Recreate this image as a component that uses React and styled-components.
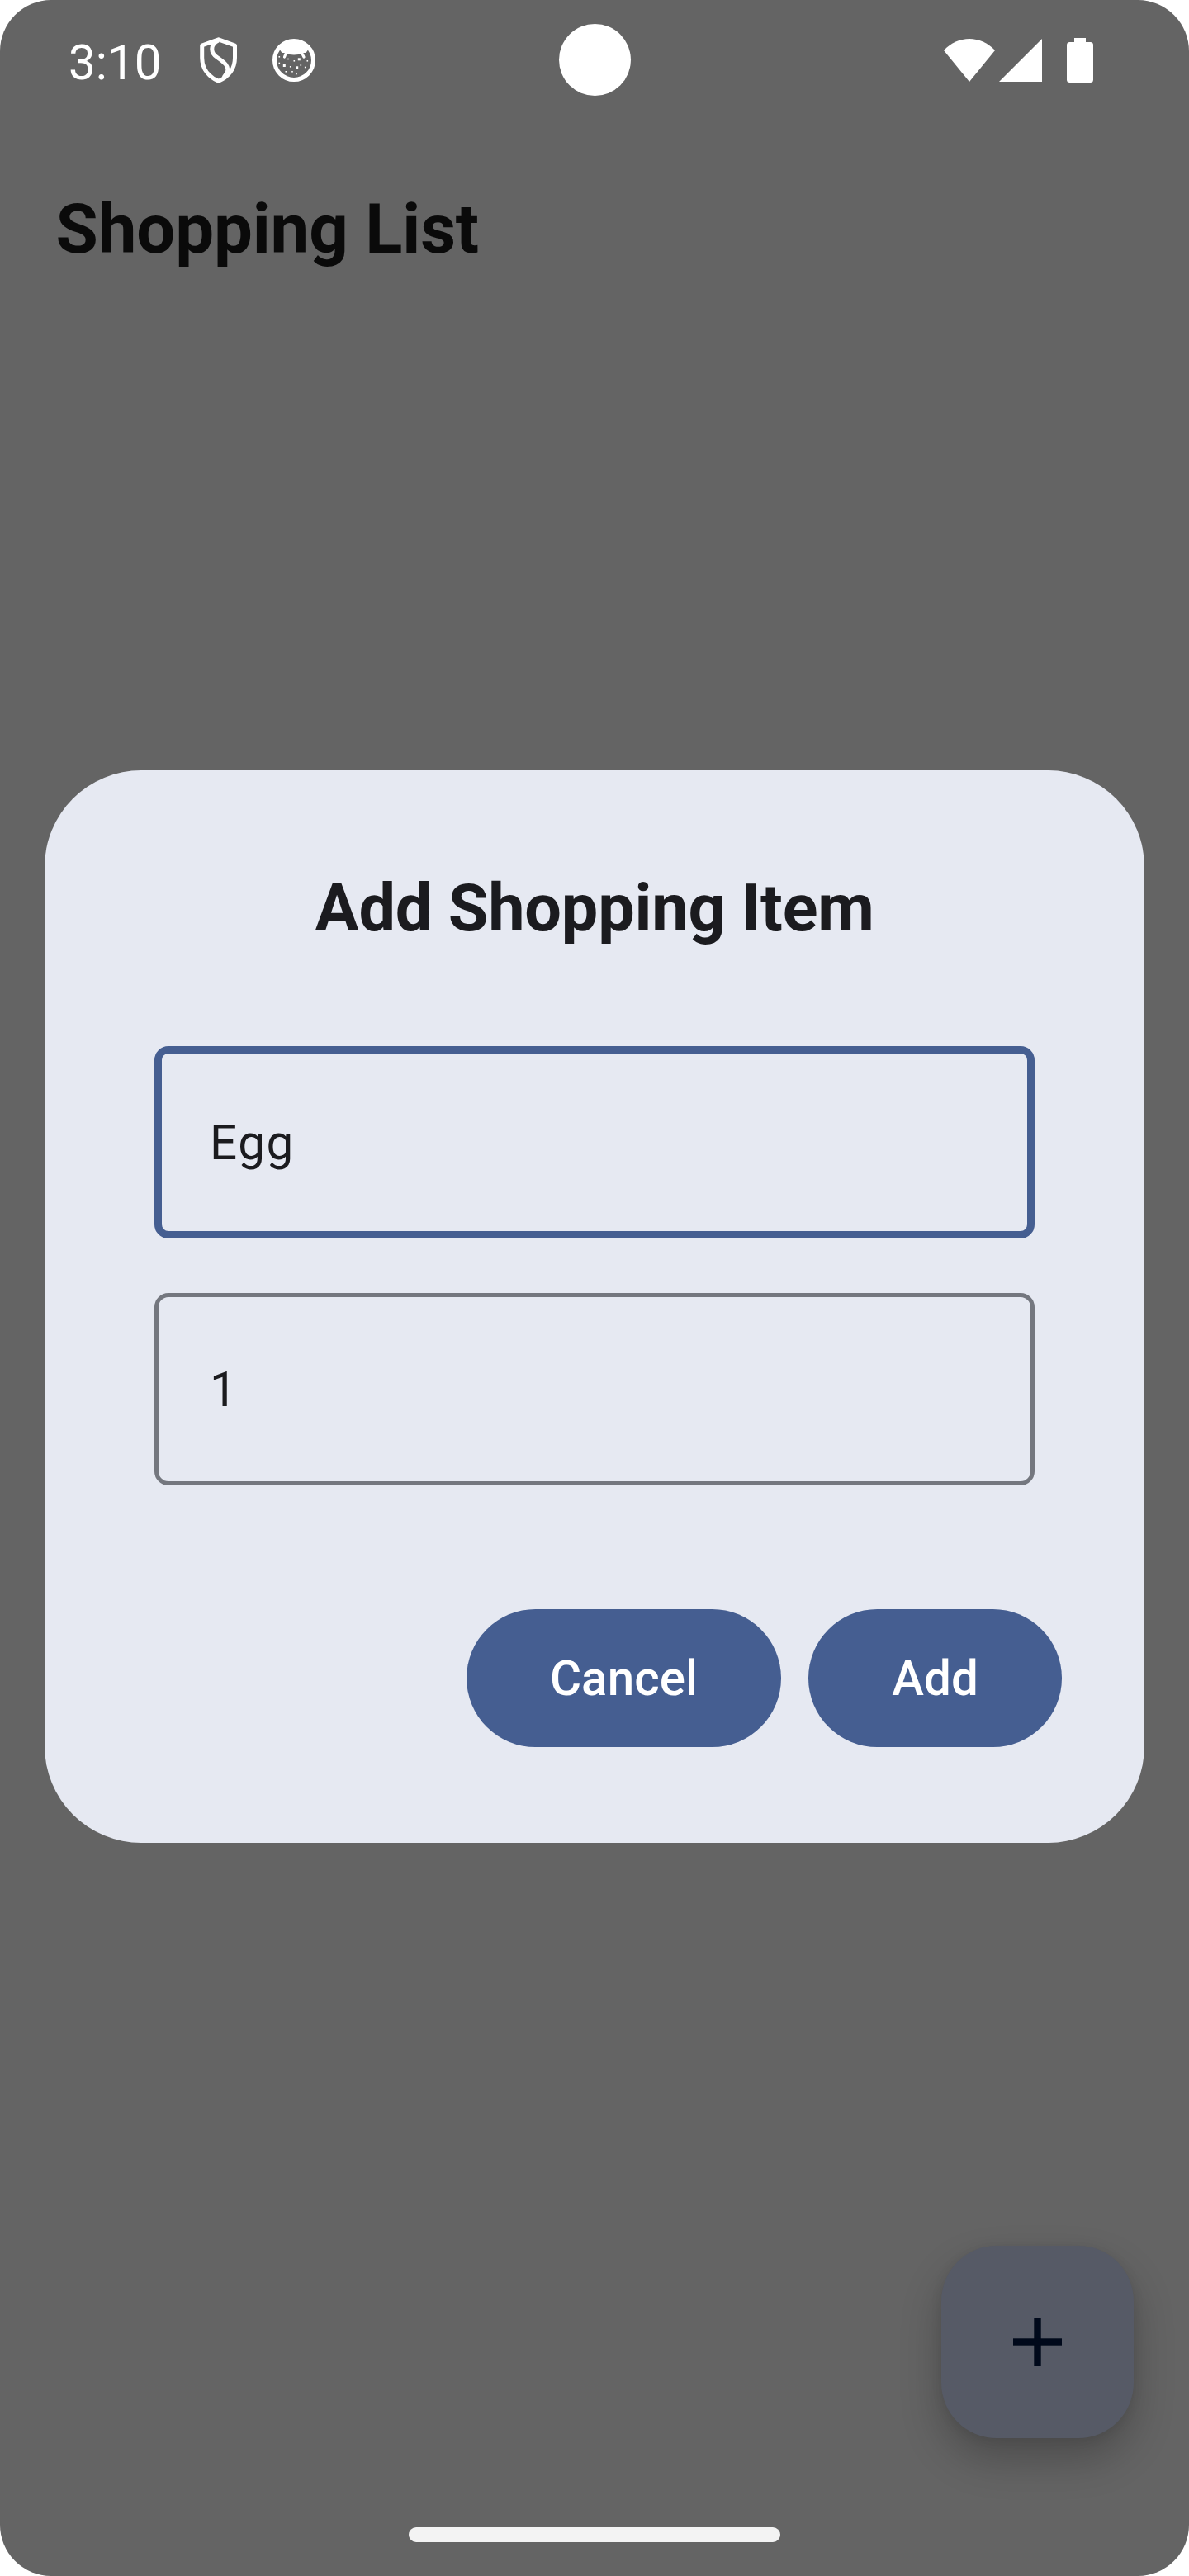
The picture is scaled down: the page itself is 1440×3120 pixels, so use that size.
import React from "react";
import styled, { createGlobalStyle } from "styled-components";

const Global = createGlobalStyle`
  *, *::before, *::after { box-sizing: border-box; }
  body { margin: 0; background: #ffffff; font-family: Roboto, "Liberation Sans", sans-serif; }
`;

const Screen = styled.div`
  position: relative;
  display: flex;
  flex-direction: column;
  width: 1440px;
  height: 3120px;
  border-radius: 62px;
  background: #646464;
  overflow: hidden;
`;

const StatusBar = styled.header`
  display: grid;
  grid-template-columns: 1fr 87px 1fr;
  height: 144px;
  padding: 0 116px 0 83px;
  flex: none;
`;

const StatusGroup = styled.div`
  display: flex;
  align-items: flex-start;
  justify-content: ${(p) => (p.$end ? "flex-end" : "flex-start")};
  padding-top: ${(p) => (p.$end ? 46 : 42)}px;
`;

const Clock = styled.span`
  width: 159px;
  color: #ffffff;
  font-size: 58.33px;
  line-height: 69px;
`;

const Glyph = styled.svg`
  display: block;
  flex: none;
  overflow: visible;
  margin-left: ${(p) => p.$gap || 0}px;
  margin-top: ${(p) => p.$drop || 0}px;
`;

const Camera = styled.div`
  width: 87px;
  height: 87px;
  margin: 29px 0 0 17px;
  border-radius: 50%;
  background: #ffffff;
`;

const AppBar = styled.div`
  display: flex;
  align-items: center;
  height: 267px;
  padding: 0 67.5px;
  flex: none;
`;

const AppTitle = styled.h1`
  margin: 0;
  color: #0a0a0a;
  font-size: 83.33px;
  font-weight: 700;
  line-height: 100px;
  letter-spacing: -0.12px;
`;

const Body = styled.main`
  display: flex;
  flex: 1;
  align-items: flex-end;
  justify-content: flex-end;
  padding: 0 67px 58px 0;
`;

const Fab = styled.button`
  display: flex;
  align-items: center;
  justify-content: center;
  width: 233px;
  height: 233px;
  padding: 0;
  border: 0;
  border-radius: 67px;
  background: #565a66;
  box-shadow: 0 25px 50px rgba(0, 0, 0, 0.24), 0 2px 14px rgba(0, 0, 0, 0.08);
`;

const NavBar = styled.footer`
  display: flex;
  justify-content: center;
  height: 109px;
  padding-top: 50px;
  flex: none;
`;

const NavHandle = styled.div`
  width: 450px;
  height: 17.5px;
  border-radius: 9px;
  background: #f3f3f3;
`;

const Overlay = styled.div`
  position: absolute;
  inset: 0;
  display: flex;
  flex-direction: column;
  align-items: center;
  padding-top: 933px;
`;

const Dialog = styled.section`
  display: flex;
  flex-direction: column;
  width: 1332px;
  height: 1299px;
  padding: 117px 100px 0 133px;
  border-radius: 117px;
  background: #e6e9f2;
`;

const DialogTitle = styled.h2`
  width: 1066px;
  margin: 0 0 117px;
  color: #1b1b1f;
  font-size: 79.17px;
  font-weight: 700;
  line-height: 100px;
  letter-spacing: -0.18px;
  text-align: center;
`;

const Fields = styled.div`
  display: flex;
  flex-direction: column;
  gap: 66px;
  width: 1066px;
`;

const Field = styled.div`
  display: flex;
  align-items: center;
  height: 233px;
  padding-left: ${(p) => (p.$focused ? 58 : 62)}px;
  border: ${(p) => (p.$focused ? "9px solid #455e91" : "5px solid #74777f")};
  border-radius: 17px;
  color: #1b1b1f;
  font-size: 58.33px;
  line-height: 70px;
  letter-spacing: 1.6px;
`;

const Actions = styled.div`
  display: flex;
  justify-content: flex-end;
  gap: 33px;
  margin-top: 150px;
`;

const Button = styled.button`
  display: flex;
  align-items: center;
  justify-content: center;
  width: ${(p) => p.$width}px;
  height: 167px;
  padding: 0;
  border: 0;
  border-radius: 84px;
  background: #455e91;
  color: #ffffff;
  font: 500 58.33px/70px Roboto, "Liberation Sans", sans-serif;
  letter-spacing: 0.1px;
`;

const ShieldIcon = () => (
  <Glyph width="46" height="56" viewBox="0 0 46 56" $drop={3} fill="none" stroke="#fff" strokeWidth="5" strokeLinejoin="round">
    <path d="M22.700 2.800 L42.500 10 V25 C42.500 39 34 48.500 22.700 53.200 C11.500 48.500 2.700 39 2.700 25 V10 Z" />
    <path d="M22.500 4 C12.500 8.500 12.500 19 21 24.500 C29 30 36.500 35.500 33 43 L29 49" />
  </Glyph>
);

const specks = [
  [8.3, 21.8, 0.8], [8.3, 29.5, 0.8], [14.3, 32.5, 1.5], [19, 24.5, 0.8], [21.7, 33.8, 0.8],
  [26.3, 26.8, 0.8], [32.3, 24.8, 1.5], [34.3, 32, 0.8], [29.7, 34.8, 1.5], [42.3, 26.8, 0.8],
  [39.7, 34.5, 0.8], [16.3, 39.8, 0.8], [24, 39.8, 0.8], [29, 42.5, 0.8],
];

const CatIcon = () => (
  <Glyph width="52" height="52" viewBox="0 0 52 52" $gap={42} $drop={5} fill="#fff">
    <circle cx="26" cy="26" r="23.500" fill="none" stroke="#fff" strokeWidth="5" />
    <path d="M8 12 A23 23 0 0 1 44 12 L40.500 17 L37 17 Q26 22 15 17 L11.500 17 Z" />
    <path d="M16.500 17 L14.500 22 M35.500 17 L38 22" stroke="#fff" strokeWidth="3.200" strokeLinecap="round" />
    {specks.map(([x, y, r]) => (
      <rect key={`${x}-${y}`} x={x - r} y={y - r} width={r * 2} height={r * 2} />
    ))}
  </Glyph>
);

const WifiIcon = () => (
  <Glyph width="62" height="53" viewBox="0 0 62 53" $drop={1} fill="#fff">
    <path d="M0 14 C17 -4.700 45 -4.700 62 14 L31 52 Z" />
  </Glyph>
);

const SignalIcon = () => (
  <Glyph width="52" height="52" viewBox="0 0 52 52" $gap={5} $drop={1} fill="#fff">
    <path d="M0 52 H52 V0 Z" />
  </Glyph>
);

const BatteryIcon = () => (
  <Glyph width="32" height="54" viewBox="0 0 32 54" $gap={30} fill="#fff">
    <rect x="9" width="14" height="8" />
    <rect y="5" width="32" height="49" rx="3.500" />
  </Glyph>
);

const PlusIcon = () => (
  <Glyph width="59" height="59" viewBox="0 0 59 59" fill="#00091b">
    <rect x="25.300" width="8.400" height="59" />
    <rect y="25.300" width="59" height="8.400" />
  </Glyph>
);

export default function App() {
  return (
    <>
      <Global />
      <Screen>
        <StatusBar>
          <StatusGroup>
            <Clock>3:10</Clock>
            <ShieldIcon />
            <CatIcon />
          </StatusGroup>
          <Camera />
          <StatusGroup $end>
            <WifiIcon />
            <SignalIcon />
            <BatteryIcon />
          </StatusGroup>
        </StatusBar>
        <AppBar>
          <AppTitle>Shopping List</AppTitle>
        </AppBar>
        <Body>
          <Fab aria-label="Add item">
            <PlusIcon />
          </Fab>
        </Body>
        <NavBar>
          <NavHandle />
        </NavBar>
        <Overlay>
          <Dialog>
            <DialogTitle>Add Shopping Item</DialogTitle>
            <Fields>
              <Field $focused>Egg</Field>
              <Field>1</Field>
            </Fields>
            <Actions>
              <Button $width={381}>Cancel</Button>
              <Button $width={307}>Add</Button>
            </Actions>
          </Dialog>
        </Overlay>
      </Screen>
    </>
  );
}
